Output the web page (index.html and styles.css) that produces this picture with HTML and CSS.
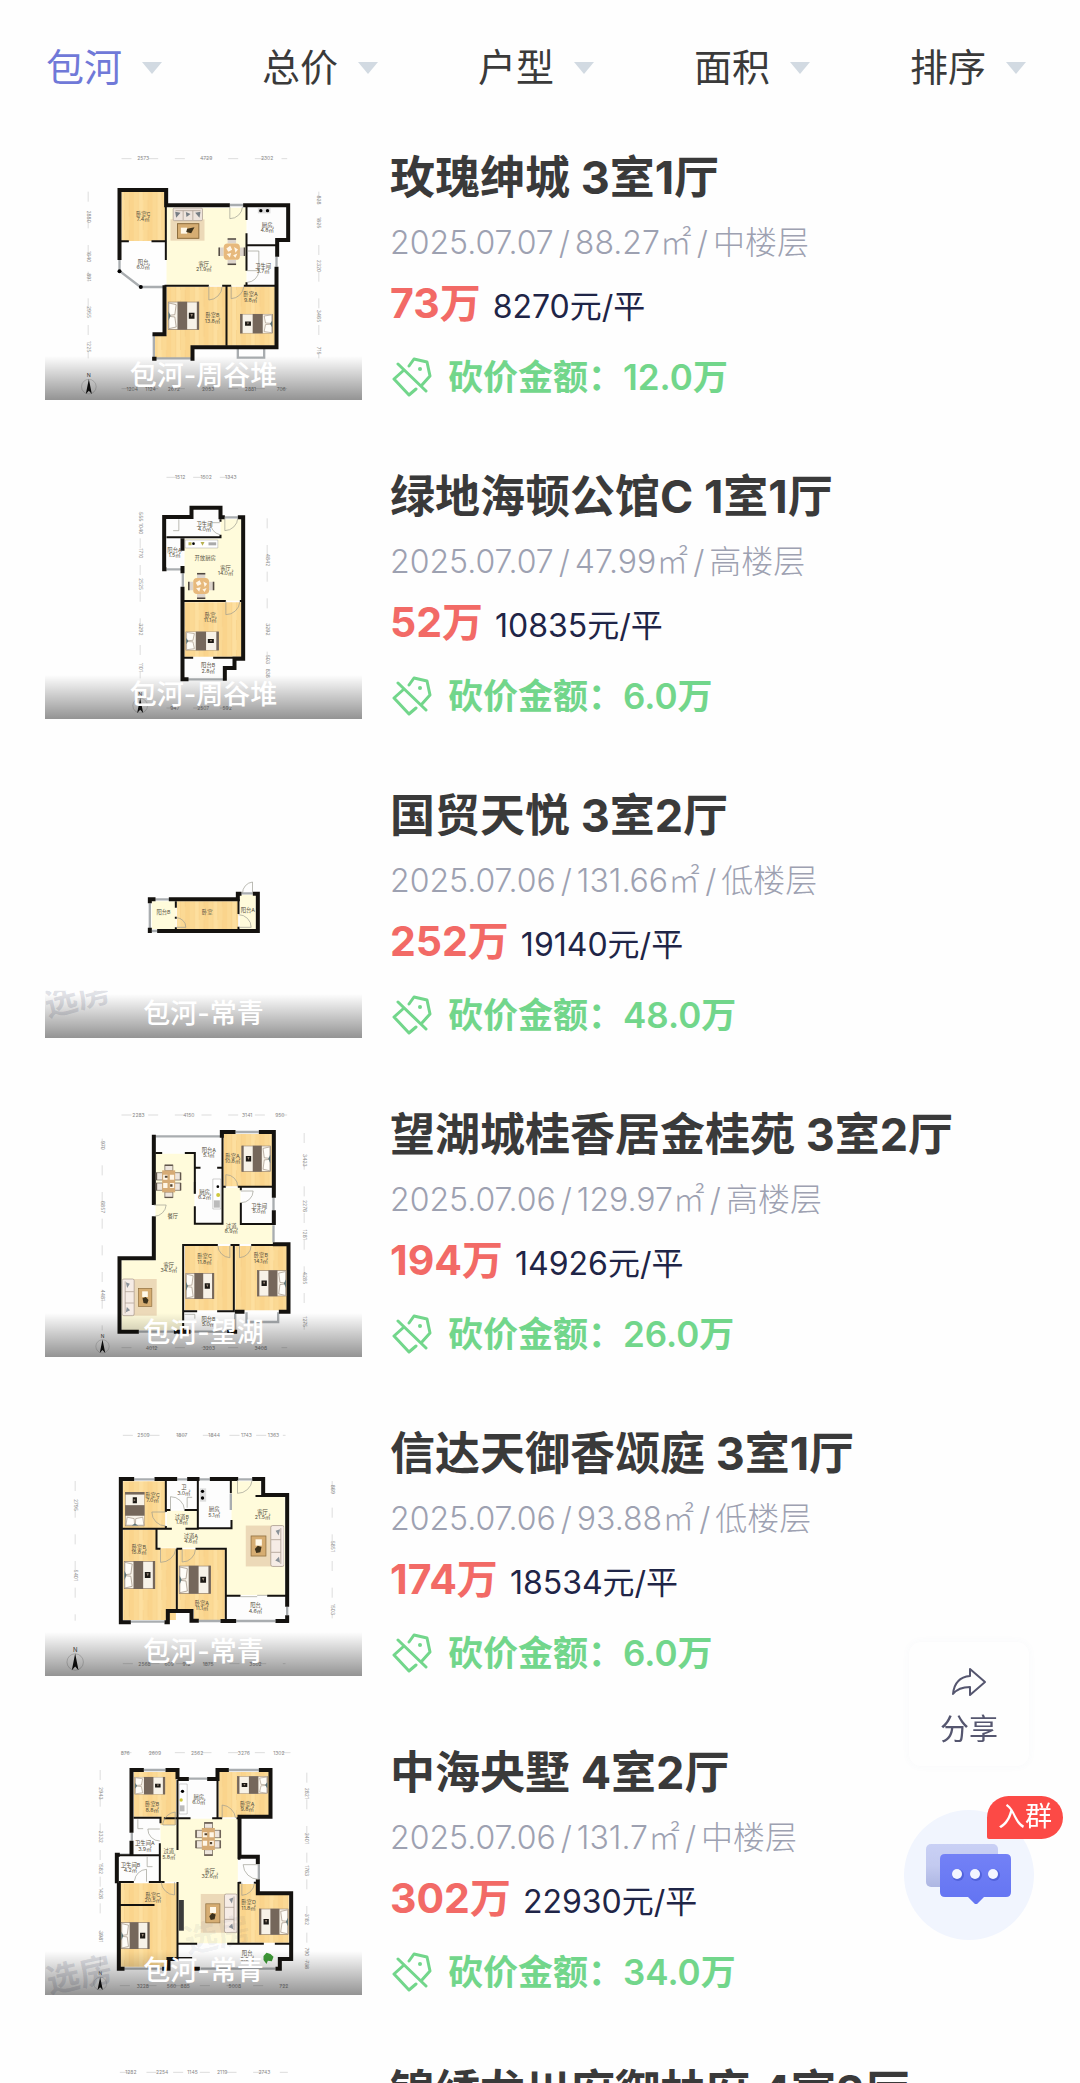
FILE: index.html
```
<!DOCTYPE html>
<html lang="zh-CN">
<head>
  <meta charset="UTF-8">
  <meta name="viewport" content="width=device-width, initial-scale=1.0">
  <title>包河二手房</title>
  <link rel="stylesheet" href="styles.css">
</head>
<body>
  <!-- shared shapes for the floor plans -->
  <svg class="defs" width="0" height="0" aria-hidden="true">
    <defs>
      <pattern id="wood" width="56" height="90" patternUnits="userSpaceOnUse">
        <rect width="56" height="90" fill="#fbd994"></rect>
        <rect x="14" width="14" height="90" fill="#fddf9f"></rect>
        <rect x="42" width="14" height="90" fill="#fad48c"></rect>
        <path d="M14 0V90M28 30V90M42 0V50" stroke="#f2c67a" stroke-width="1"></path>
      </pattern>
      <symbol id="bed" viewBox="0 0 96 86" preserveAspectRatio="none">
        <rect x="2" y="2" width="92" height="82" fill="#f7f2e8" stroke="#8a7868" stroke-width="2"></rect>
        <path d="M4 5L26 10L22 40L4 42ZM4 45L22 47L26 77L4 82Z" fill="#fffdf8" stroke="#98897a" stroke-width="2"></path>
        <path d="M3 30L9 43L3 58Z" fill="#587277"></path>
        <rect x="30" y="1" width="29" height="84" fill="#75675b"></rect>
        <rect x="88" y="1" width="7" height="84" fill="#75675b"></rect>
        <path d="M64 34H81V52H64Z" fill="#1c1915"></path>
        <path d="M69 38H76L73 47Z" fill="#9b8b7b"></path>
      </symbol>
      <symbol id="sofa" viewBox="0 0 104 110">
        <rect x="26" y="0" width="78" height="110" fill="#ecd9b8"></rect>
        <rect x="0" y="0" width="36" height="110" rx="5" fill="#f6ece6" stroke="#a39488" stroke-width="2"></rect>
        <path d="M9 7V103M9 38H35M9 72H35" stroke="#a39488" stroke-width="2"></path>
        <path d="M11 10L23 14L15 27ZM11 100L24 94L14 84Z" fill="#8b9299"></path>
        <rect x="49" y="28" width="40" height="54" fill="#d6ad72" stroke="#8d6d3e" stroke-width="2"></rect>
        <rect x="60" y="37" width="17" height="17" fill="#fff8e8"></rect>
        <path d="M61 58L71 54L79 63L75 74L64 72Z" fill="#3d321c"></path>
      </symbol>
      <symbol id="dining" viewBox="0 0 84 84">
        <path d="M29 2H55V17H29ZM29 67H55V82H29ZM2 29H17V55H2ZM67 29H82V55H67Z" fill="#ddd5cc"></path>
        <path d="M29 3H55M29 81H55M3 29V55M81 29V55" stroke="#504840" stroke-width="5"></path>
        <rect x="17" y="17" width="50" height="50" rx="12" fill="#e7b97c"></rect>
        <path d="M25 32L37 24L43 36L31 42ZM49 28L61 35L53 45ZM26 49L40 46L36 60ZM46 53L59 48L53 61Z" fill="#fff6e6"></path>
      </symbol>
      <symbol id="dining6" viewBox="0 0 78 102">
        <path d="M28 1H52V19H28ZM28 83H52V101H28ZM1 25H22V47H1ZM1 56H22V78H1ZM56 25H77V47H56ZM56 56H77V78H56Z" fill="#eee6dd" stroke="#61564b" stroke-width="2"></path>
        <path d="M28 3H52M28 99H52M3 25V47M3 56V78M75 25V47M75 56V78" stroke="#61564b" stroke-width="4"></path>
        <rect x="20" y="18" width="39" height="66" fill="#d6ab75"></rect>
        <path d="M23 31H36V46H23ZM43 31H56V46H43ZM23 56H36V71H23ZM43 56H56V71H43Z" fill="#fff6e6"></path>
        <path d="M28 34H36V40H28ZM44 60H51V67H44Z" fill="#53432f"></path>
      </symbol>
      <symbol id="north" viewBox="0 0 50 66">
        <text x="25" y="14" class="north">N</text>
        <circle cx="25" cy="42" r="22" fill="none" stroke="#8a8a8a"></circle>
        <path d="M25 19L34 64L25 54L16 64Z" fill="#111"></path>
      </symbol>
      <symbol id="tag" viewBox="0 0 40 40">
        <path d="M17 9L22 2L35 5L38 19L29 29M12 13L2 22L17 38L24 32M6 7L34 34" fill="none" stroke="#72d68b" stroke-width="3" stroke-linecap="round" stroke-linejoin="round"></path>
        <circle cx="28" cy="12" r="2" fill="#72d68b"></circle>
      </symbol>
    </defs>
  </svg>

  <div class="app">
    <nav class="filters">
      <button type="button" class="filter active">包河</button>
      <button type="button" class="filter">总价</button>
      <button type="button" class="filter">户型</button>
      <button type="button" class="filter">面积</button>
      <button type="button" class="filter">排序</button>
    </nav>

    <main class="list">
      <a class="house" href="#">
        <div class="photo">
          <svg class="plan" viewBox="15 -12 948 792">
            <path class="floor" d="M378 203H618V437H378Z"></path>
            <path fill="url(#wood)" d="M243 155H374V303H243ZM378 440H703V617H455V655H343V585H378Z"></path>
            <path class="tile" d="M622 203H740V297H706V435H622Z"></path>
            <path class="win" d="M237 360V393L300 441H372M340 583V655H455M592 620V653H671V620M708 350V380M568 195H610"></path>
            <path class="wall" d="M237 360V150H377V196H568M608 196H743V300H710V350M708 380V622H456V662M372 436V583H336M335 656H348"></path>
            <path class="inner" d="M376 155V360M235 304H265M333 304H376M372 437H505M545 437H572M610 437H705M558 437V617M618 197V240M618 280V392M618 427V437M618 316H708"></path>
            <path class="door" d="M568 200V236A38 38 0 0 0 606 200M505 438V480A42 42 0 0 0 545 440M572 438V476A40 40 0 0 0 610 440M620 392H655V333H622M655 392A36 36 0 0 1 620 427"></path>
            <circle cx="237" cy="394" r="6"></circle><circle cx="301" cy="441" r="6"></circle>
            <rect x="390" y="238" width="102" height="64" fill="#ecd9b8"></rect>
            <rect x="398" y="204" width="88" height="38" rx="4" fill="#eee4dc" stroke="#a39488" stroke-width="2"></rect>
            <path d="M428 212V240M457 212V240M405 212H480" stroke="#a39488" stroke-width="2"></path>
            <path d="M404 215L420 218L407 233ZM436 216L450 222L438 231ZM464 218L480 215L477 233Z" fill="#777e84"></path>
            <rect x="411" y="251" width="64" height="44" fill="#d6ad72" stroke="#8d6d3e" stroke-width="3"></rect>
            <path d="M421 263H440V281H421Z" fill="#fff8e8"></path><path d="M440 266L462 262L452 280L437 276Z" fill="#3d321c"></path>
            <use href="#dining" x="533" y="294" width="82" height="82"></use>
            <use href="#bed" x="381" y="484" width="96" height="86"></use>
            <use href="#bed" width="100" height="60" transform="translate(698 521) scale(-1 1)"></use>
            <path d="M652 204H690V220H652Z" fill="#dedede"></path><circle cx="661" cy="212" r="5"></circle><circle cx="681" cy="212" r="5"></circle>
            <g class="room">
              <text x="308" y="228">卧室C</text><text x="308" y="244">7.4㎡</text>
              <text x="308" y="371">阳台</text><text x="308" y="387">6.0㎡</text>
              <text x="490" y="378">客厅</text><text x="490" y="394">21.9㎡</text>
              <text x="680" y="261">厨房</text><text x="680" y="277">4.8㎡</text>
              <text x="668" y="384">卫生间</text><text x="668" y="400">3.7㎡</text>
              <text x="516" y="531">卧室B</text><text x="516" y="548">13.8㎡</text>
              <text x="630" y="468">卧室A</text><text x="630" y="485">9.8㎡</text>
            </g>
            <path class="rule" d="M243 56H740M143 155V655M835 155V655M243 746H740"></path>
            <g class="dim">
              <text x="308" y="61">2573</text><text x="497" y="61">4729</text><text x="680" y="61">2302</text>
              <text x="275" y="752">1204</text><text x="330" y="752">1124</text><text x="400" y="752">2672</text><text x="503" y="752">2053</text><text x="630" y="752">2881</text><text x="722" y="752">706</text>
              <text transform="translate(138 230) rotate(90)">2880</text><text transform="translate(138 350) rotate(90)">1640</text><text transform="translate(138 412) rotate(90)">891</text><text transform="translate(138 516) rotate(90)">2955</text><text transform="translate(138 620) rotate(90)">1225</text>
              <text transform="translate(830 180) rotate(90)">828</text><text transform="translate(830 248) rotate(90)">1825</text><text transform="translate(830 378) rotate(90)">2320</text><text transform="translate(830 528) rotate(90)">3465</text><text transform="translate(830 632) rotate(90)">715</text>
            </g>
            <use href="#north" x="120" y="698" width="50" height="66"></use>
          </svg>
          <span class="area">包河-周谷堆</span>
        </div>
        <div class="info">
          <h2>玫瑰绅城 3室1厅</h2>
          <p class="meta"><span>2025.07.07</span><i>/</i><span>88.27㎡</span><i>/</i><span>中楼层</span></p>
          <p class="price"><strong>73万</strong><span>8270元/平</span></p>
          <p class="cut"><svg><use href="#tag"></use></svg>砍价金额：12.0万</p>
        </div>
      </a>

      <a class="house" href="#">
        <div class="photo">
          <svg class="plan" viewBox="15 -15 948 792">
            <path class="floor" d="M432 236H540V178H604V422H432Z"></path>
            <path fill="url(#wood)" d="M432 427H604V590H432Z"></path>
            <path class="tile" d="M378 178H453V150H538V230H427V325H378ZM432 597H578V622H552V655H432Z"></path>
            <path class="win" d="M378 328H425M432 658H552M427 340V380M553 172H592"></path>
            <path class="wall" d="M378 328H371V171H453V143H540V172H553M592 172H608V596H582V624H553V662M444 658H426V380M426 340V318M426 272V235"></path>
            <path class="inner" d="M378 232H432M426 232H540V224M540 178V185M428 423H556M598 423H606M428 593H458M518 593H606"></path>
            <path class="door" d="M553 172V212A40 40 0 0 0 592 174M556 424V464A42 42 0 0 0 598 426M510 188H538M510 188A36 36 0 0 0 538 224M415 178V212H398"></path>
            <path d="M434 240H532V264H434Z" fill="#fff" stroke="#777"></path>
            <path d="M444 247H453V256H444ZM480 246H492L486 257Z" fill="#b6b04f"></path><circle cx="459" cy="251" r="4"></circle><path d="M504 247H527V256H504Z" fill="#aaa"></path>
            <use href="#dining" x="440" y="338" width="84" height="80"></use>
            <use href="#bed" x="434" y="514" width="102" height="58"></use>
            <g class="room">
              <text x="492" y="197">卫生间</text><text x="492" y="213">4.0㎡</text>
              <text x="402" y="276">阳台A</text><text x="402" y="292">1.5㎡</text>
              <text x="494" y="299">开放厨房</text>
              <text x="555" y="329">客厅</text><text x="555" y="345">14.0㎡</text>
              <text x="509" y="470">卧室</text><text x="509" y="486">11.1㎡</text>
              <text x="503" y="622">阳台B</text><text x="503" y="638">2.8㎡</text>
            </g>
            <path class="rule" d="M378 52H604M299 155V655M680 175V655M378 744H570"></path>
            <g class="dim">
              <text x="419" y="58">1512</text><text x="497" y="58">1502</text><text x="571" y="58">1343</text>
              <text x="403" y="750">947</text><text x="488" y="750">2507</text><text x="560" y="750">592</text>
              <text transform="translate(294 170) rotate(90)">555</text><text transform="translate(294 206) rotate(90)">1040</text><text transform="translate(294 280) rotate(90)">1710</text><text transform="translate(294 372) rotate(90)">2525</text><text transform="translate(294 508) rotate(90)">3292</text><text transform="translate(294 622) rotate(90)">1101</text>
              <text transform="translate(675 300) rotate(90)">4842</text><text transform="translate(675 508) rotate(90)">3292</text><text transform="translate(675 598) rotate(90)">503</text><text transform="translate(675 640) rotate(90)">838</text>
            </g>
            <use href="#north" x="274" y="695" width="50" height="66"></use>
          </svg>
          <span class="area">包河-周谷堆</span>
        </div>
        <div class="info">
          <h2>绿地海顿公馆C 1室1厅</h2>
          <p class="meta"><span>2025.07.07</span><i>/</i><span>47.99㎡</span><i>/</i><span>高楼层</span></p>
          <p class="price"><strong>52万</strong><span>10835元/平</span></p>
          <p class="cut"><svg><use href="#tag"></use></svg>砍价金额：6.0万</p>
        </div>
      </a>

      <a class="house" href="#">
        <div class="photo">
          <svg class="plan" viewBox="15 -258 948 792">
            <path class="floor" d="M334 124H406V207H334ZM598 104H646V207H598Z"></path>
            <path fill="url(#wood)" d="M409 124H593V207H409Z"></path>
            <path class="win" d="M344 118H386M328 130V205M334 213H352M603 100H637"></path>
            <path class="wall" d="M322 118H345M328 112V130M385 118H592V96M586 101H603M637 101H652V213H350M334 213H322M328 219V203"></path>
            <path class="inner" d="M406 124V143M406 170V176M406 202V210M594 118V162M594 200V210"></path>
            <path class="door" d="M636 66V102M606 100A34 34 0 0 1 636 66M408 173A29 29 0 0 1 436 202H408M594 164A38 38 0 0 1 632 202H596"></path>
            <g class="room">
              <text x="369" y="163">阳台B</text><text x="500" y="163">卧室</text><text x="622" y="155">阳台A</text>
            </g>
            <svg x="15" y="392" width="948" height="142">
              <text class="mark" transform="translate(6 78) rotate(-14)">选房</text>
            </svg>
          </svg>
          <span class="area">包河-常青</span>
        </div>
        <div class="info">
          <h2>国贸天悦 3室2厅</h2>
          <p class="meta"><span>2025.07.06</span><i>/</i><span>131.66㎡</span><i>/</i><span>低楼层</span></p>
          <p class="price"><strong>252万</strong><span>19140元/平</span></p>
          <p class="cut"><svg><use href="#tag"></use></svg>砍价金额：48.0万</p>
        </div>
      </a>

      <a class="house" href="#">
        <div class="photo">
          <svg class="plan" viewBox="15 -22 948 792">
            <path class="floor" d="M345 160H462V370H549V262H600V371H697V431H428V690H243V480H345Z"></path>
            <path fill="url(#wood)" d="M549 101H695V258H549ZM433 437H579V630H433ZM584 437H742V630H584Z"></path>
            <path class="tile" d="M345 108H545V368H465V157H345ZM603 262H695V369H603ZM430 637H582V690H430Z"></path>
            <path class="win" d="M345 108H540M585 95H655M699 292V330M699 375V425M618 636V665H713V636M295 694H400M450 694H560M584 640V690M463 245V280"></path>
            <path class="wall" d="M340 103V314M340 348V474H237V694H295M400 694H450M560 694H590M585 95H544V112M655 95H700V292M700 330V374M697 432H744V634H715M612 634H583"></path>
            <path class="inner" d="M345 158H365M433 158H463V202H480M530 202H546M546 95V370H463V318M463 280V245M463 202V245M546 259H556M592 259H700M601 259V270M601 307V371H700M428 694V434H532M570 434H597M632 434H700M580 434V634M428 633H470M530 633H583"></path>
            <path class="door" d="M340 314H377A37 37 0 0 1 342 348M556 259V223A36 36 0 0 1 592 259M601 272H638A36 36 0 0 1 602 307M568 436V472A38 38 0 0 1 532 436M597 436V472A37 37 0 0 0 632 436M432 642H463V655"></path>
            <path d="M517 236H541V326H517Z" fill="#fff" stroke="#777"></path><circle cx="532" cy="259" r="4"></circle><circle cx="533" cy="284" r="6" fill="#cfc83d"></circle><path d="M520 300H538V322H520Z" fill="#bbb"></path>
            <use href="#dining6" x="345" y="192" width="78" height="102"></use>
            <use href="#sofa" x="245" y="531" width="104" height="120"></use>
            <use href="#bed" x="434" y="517" width="88" height="80"></use>
            <use href="#bed" width="90" height="80" transform="translate(692 135) scale(-1 1)"></use>
            <use href="#bed" width="90" height="80" transform="translate(739 509) scale(-1 1)"></use>
            <g class="room">
              <text x="505" y="154">阳台A</text><text x="505" y="170">5.1㎡</text>
              <text x="576" y="173">卧室A</text><text x="576" y="189">10.8㎡</text>
              <text x="492" y="281">厨房</text><text x="492" y="297">6.2㎡</text>
              <text x="656" y="323">卫生间</text><text x="656" y="339">5.0㎡</text>
              <text x="397" y="354">餐厅</text>
              <text x="572" y="383">过道</text><text x="572" y="399">8.9㎡</text>
              <text x="385" y="499">客厅</text><text x="385" y="515">34.5㎡</text>
              <text x="492" y="474">卧室C</text><text x="492" y="490">11.8㎡</text>
              <text x="661" y="471">卧室B</text><text x="661" y="487">14.1㎡</text>
              <text x="504" y="661">阳台B</text><text x="504" y="677">5.0㎡</text>
            </g>
            <path class="rule" d="M243 44H740M185 115V690M791 98V690M243 742H740"></path>
            <g class="dim">
              <text x="294" y="50">2283</text><text x="445" y="50">4150</text><text x="620" y="50">3141</text><text x="718" y="50">950</text>
              <text x="333" y="748">4012</text><text x="505" y="748">3203</text><text x="661" y="748">3408</text>
              <text transform="translate(180 135) rotate(90)">970</text><text transform="translate(180 320) rotate(90)">6857</text><text transform="translate(180 585) rotate(90)">4481</text>
              <text transform="translate(786 180) rotate(90)">3423</text><text transform="translate(786 317) rotate(90)">2276</text><text transform="translate(786 403) rotate(90)">1281</text><text transform="translate(786 533) rotate(90)">4285</text><text transform="translate(786 664) rotate(90)">1275</text>
            </g>
            <use href="#north" x="161" y="700" width="50" height="60"></use>
          </svg>
          <span class="area">包河-望湖</span>
        </div>
        <div class="info">
          <h2>望湖城桂香居金桂苑 3室2厅</h2>
          <p class="meta"><span>2025.07.06</span><i>/</i><span>129.97㎡</span><i>/</i><span>高楼层</span></p>
          <p class="price"><strong>194万</strong><span>14926元/平</span></p>
          <p class="cut"><svg><use href="#tag"></use></svg>砍价金额：26.0万</p>
        </div>
      </a>

      <a class="house" href="#">
        <div class="photo">
          <svg class="plan" viewBox="15 -24 948 792">
            <path class="floor" d="M379 272H470V326H573V184H660V231H733V525H557V383H350V328H379Z"></path>
            <path fill="url(#wood)" d="M247 184H374V324H247ZM247 330H347V385H406V600H247ZM412 388H553V600H460V568H412Z"></path>
            <path class="tile" d="M380 184H468V268H380ZM476 184H571V322H476ZM560 532H733V598H560Z"></path>
            <path class="win" d="M281 178H342M410 178H440M476 178H508M271 605H372M475 603H540M587 603H705M740 560V586M571 222V270M593 178H635"></path>
            <path class="wall" d="M281 177H241V607H271M372 607H382V573H453V602H475M342 177H410M440 177H477M508 177H593M635 177H668V225H740V560M745 603H705M740 586V608M587 603H540"></path>
            <path class="inner" d="M376 183V276M376 318V325M376 270H390M432 270H472M472 183V325H573V300M571 183V220M241 326H394M435 326H475M348 326V386H360M408 386H425M465 386H556V602M409 386V573M556 527H600M680 527H740M645 228H665"></path>
            <path class="door" d="M591 180V220A44 44 0 0 0 635 180M376 276H334A42 42 0 0 0 376 318M390 270V230A42 42 0 0 1 432 270M360 387V427A46 46 0 0 0 406 387M425 387V426A40 40 0 0 0 465 387M440 263V232H455M600 530H650M650 526H680"></path>
            <path d="M478 205H497V245H478Z" fill="#dedede"></path><circle cx="486" cy="214" r="5"></circle><circle cx="486" cy="234" r="5"></circle>
            <use href="#sofa" width="116" height="132" transform="translate(731 312) scale(-1 1)"></use>
            <use href="#bed" width="105" height="60" transform="translate(253 320) rotate(-90)"></use>
            <use href="#bed" x="249" y="422" width="96" height="86"></use>
            <use href="#bed" x="414" y="436" width="98" height="86"></use>
            <g class="room">
              <text x="336" y="231">卧室C</text><text x="336" y="247">7.0㎡</text>
              <text x="430" y="208">卫</text><text x="430" y="224">3.0㎡</text>
              <text x="521" y="274">厨房</text><text x="521" y="290">5.1㎡</text>
              <text x="424" y="297">过道B</text><text x="424" y="313">1.8㎡</text>
              <text x="451" y="353">过道A</text><text x="451" y="369">4.6㎡</text>
              <text x="666" y="281">客厅</text><text x="666" y="297">21.5㎡</text>
              <text x="295" y="387">卧室B</text><text x="295" y="403">15.8㎡</text>
              <text x="484" y="555">卧室A</text><text x="484" y="571">11.1㎡</text>
              <text x="645" y="562">阳台</text><text x="645" y="578">4.6㎡</text>
            </g>
            <path class="rule" d="M247 46H735M104 183V602M875 183V595M247 731H735"></path>
            <g class="dim">
              <text x="309" y="52">2509</text><text x="424" y="52">1807</text><text x="521" y="52">1844</text><text x="618" y="52">1743</text><text x="699" y="52">1363</text>
              <text x="312" y="737">2568</text><text x="386" y="737">609</text><text x="438" y="737">912</text><text x="503" y="737">1875</text><text x="645" y="737">3502</text>
              <text transform="translate(99 255) rotate(90)">2795</text><text transform="translate(99 466) rotate(90)">5401</text>
              <text transform="translate(870 208) rotate(90)">869</text><text transform="translate(870 379) rotate(90)">5851</text><text transform="translate(870 568) rotate(90)">1503</text>
            </g>
            <use href="#north" x="76" y="678" width="56" height="76"></use>
          </svg>
          <span class="area">包河-常青</span>
        </div>
        <div class="info">
          <h2>信达天御香颂庭 3室1厅</h2>
          <p class="meta"><span>2025.07.06</span><i>/</i><span>93.88㎡</span><i>/</i><span>低楼层</span></p>
          <p class="price"><strong>174万</strong><span>18534元/平</span></p>
          <p class="cut"><svg><use href="#tag"></use></svg>砍价金额：6.0万</p>
        </div>
      </a>

      <a class="house" href="#">
        <div class="photo">
          <svg class="plan" viewBox="15 -27 948 792">
            <path class="floor" d="M413 236H592V610H413V425H360V256H413Z"></path>
            <path fill="url(#wood)" d="M280 96H407V255H360V230H280ZM534 96H686V232H534ZM238 430H411V652H380V680H238ZM596 432H650V465H745V608H596Z"></path>
            <path class="tile" d="M416 122H528V232H416ZM280 236H356V342H280ZM238 350H356V422H238ZM416 614H745V650H715V684H416ZM598 356H652V425H598Z"></path>
            <path class="win" d="M310 90H375M445 116H500M565 90H655M274 278V302M238 344H270M250 686H365M480 686H705M655 372V418"></path>
            <path class="wall" d="M310 90H273V278M273 302V346M238 344H229V430M235 428V686H252M375 90H411V118M365 686H384V657H412M411 117H445M500 117H531V90H565M655 90H690V230H597V350H652V372M652 418V460H752V657H718V692M705 686H718M411 657H455M455 686H478"></path>
            <path class="inner" d="M411 120V330M408 235H370M279 233H360V250M358 310V426H325M411 235H450M515 235H545M588 235H600M531 120V235M235 346H358M235 426H280M238 495H342M411 426V655M592 356H600M594 426V610M594 428H602M640 428H655M358 426H372M411 611H470M560 611H670M703 611H750"></path>
            <path class="door" d="M367 255V250A42 42 0 0 1 404 216V255H367M545 234V195A44 44 0 0 1 585 234M358 267H322A36 36 0 0 0 358 303M282 422A38 38 0 0 1 318 388V425M362 427A42 42 0 0 0 402 465V427M608 374H654M608 374A46 46 0 0 0 654 418M604 428V466A40 40 0 0 0 642 430M292 238V266H308M320 350V380H336"></path>
            <path d="M416 132H440V222H416Z" fill="#fff" stroke="#777"></path><circle cx="426" cy="154" r="5"></circle><circle cx="422" cy="180" r="5" fill="#cfc83d"></circle><path d="M418 196H432V214H418Z" fill="#bbb"></path>
            <rect x="415" y="480" width="15" height="92" fill="#3b3b3b"></rect>
            <use href="#dining6" x="464" y="246" width="78" height="102"></use>
            <use href="#sofa" width="110" height="120" transform="translate(590 460) scale(-1 1)"></use>
            <use href="#bed" x="281" y="110" width="94" height="54"></use>
            <use href="#bed" width="94" height="54" transform="translate(683 108) scale(-1 1)"></use>
            <use href="#bed" x="240" y="546" width="88" height="82"></use>
            <use href="#bed" width="90" height="80" transform="translate(745 505) scale(-1 1)"></use>
            <path d="M669 648L678 638L690 642L699 650L694 664L682 662L678 672L669 660Z" fill="#3f9b38"></path>
            <g class="room">
              <text x="335" y="199">卧室B</text><text x="335" y="215">8.8㎡</text>
              <text x="475" y="176">厨房</text><text x="475" y="192">6.0㎡</text>
              <text x="620" y="198">卧室A</text><text x="620" y="214">9.8㎡</text>
              <text x="313" y="316">卫生间A</text><text x="313" y="332">3.9㎡</text>
              <text x="270" y="380">卫生间B</text><text x="270" y="396">4.2㎡</text>
              <text x="385" y="340">过道</text><text x="385" y="356">5.8㎡</text>
              <text x="508" y="398">客厅</text><text x="508" y="414">32.6㎡</text>
              <text x="337" y="470">卧室C</text><text x="337" y="486">20.5㎡</text>
              <text x="624" y="493">卧室D</text><text x="624" y="509">11.8㎡</text>
              <text x="620" y="646">阳台</text><text x="620" y="662">8.6㎡</text>
            </g>
            <path class="rule" d="M243 38H750M179 90V685M799 98V685M238 737H740"></path>
            <g class="dim">
              <text x="254" y="44">876</text><text x="343" y="44">2609</text><text x="470" y="44">2562</text><text x="610" y="44">3276</text><text x="715" y="44">1302</text>
              <text x="307" y="743">3228</text><text x="393" y="743">560</text><text x="434" y="743">885</text><text x="583" y="743">5008</text><text x="730" y="743">722</text>
              <text transform="translate(174 160) rotate(90)">2943</text><text transform="translate(174 290) rotate(90)">2332</text><text transform="translate(174 385) rotate(90)">1582</text><text transform="translate(174 460) rotate(90)">1426</text><text transform="translate(174 590) rotate(90)">3981</text>
              <text transform="translate(794 160) rotate(90)">2821</text><text transform="translate(794 295) rotate(90)">2401</text><text transform="translate(794 392) rotate(90)">1763</text><text transform="translate(794 538) rotate(90)">3182</text><text transform="translate(794 636) rotate(90)">790</text><text transform="translate(794 674) rotate(90)">738</text>
            </g>
            <use href="#north" x="156" y="694" width="46" height="58"></use>
            <text class="mark" transform="translate(26 760) rotate(-12)">选房</text>
            <text class="mark faint" transform="translate(440 640) rotate(-12)">选房</text>
          </svg>
          <span class="area">包河-常青</span>
        </div>
        <div class="info">
          <h2>中海央墅 4室2厅</h2>
          <p class="meta"><span>2025.07.06</span><i>/</i><span>131.7㎡</span><i>/</i><span>中楼层</span></p>
          <p class="price"><strong>302万</strong><span>22930元/平</span></p>
          <p class="cut"><svg><use href="#tag"></use></svg>砍价金额：34.0万</p>
        </div>
      </a>

      <a class="house" href="#">
        <div class="photo">
          <svg class="plan" viewBox="15 930 948 792">
            <path class="rule" d="M238 997H742"></path>
            <g class="dim">
              <text x="271" y="1003">1282</text><text x="365" y="1003">2254</text><text x="456" y="1003">1145</text><text x="545" y="1003">2119</text><text x="672" y="1003">2743</text>
            </g>
          </svg>
        </div>
        <div class="info">
          <h2>锦绣龙川府御林府 4室2厅</h2>
        </div>
      </a>
    </main>
  </div>

  <aside class="float">
    <button type="button" class="share">
      <svg width="36" height="30" viewBox="0 0 36 30">
        <path d="M19 2L34 15L19 28V20C11 20 6 22 2 27C3 17 8 10 19 9Z" fill="none" stroke="#55566f" stroke-width="2" stroke-linejoin="round"></path>
      </svg>
      分享
    </button>
    <button type="button" class="group" aria-label="入群">
      <svg width="88" height="64" viewBox="0 0 88 64">
        <defs>
          <linearGradient id="back" x1="0" y1="0" x2="0" y2="1">
            <stop offset="0" stop-color="#c9d0f5"></stop>
            <stop offset="0.5" stop-color="#c3caf0"></stop>
            <stop offset="1" stop-color="#adb6e2"></stop>
          </linearGradient>
          <linearGradient id="front" x1="0" y1="0" x2="0" y2="1">
            <stop offset="0" stop-color="#7381f6"></stop>
            <stop offset="1" stop-color="#6374f2"></stop>
          </linearGradient>
        </defs>
        <rect x="1" y="1" width="72" height="43" rx="5" fill="url(#back)"></rect>
        <path d="M20 11H81Q86 11 86 16V49Q86 54 81 54H59L52 61H50L43 54H20Q15 54 15 49V16Q15 11 20 11Z" fill="url(#front)"></path>
        <circle cx="33" cy="32" r="6" fill="#5263dc"></circle><circle cx="51" cy="32" r="6" fill="#5263dc"></circle><circle cx="69" cy="32" r="6" fill="#5263dc"></circle>
        <circle cx="32" cy="31" r="5" fill="#f3f5ff"></circle><circle cx="50" cy="31" r="5" fill="#f3f5ff"></circle><circle cx="68" cy="31" r="5" fill="#f3f5ff"></circle>
      </svg>
      <span class="badge">入群</span>
    </button>
  </aside>
</body>
</html>
```
FILE: styles.css
```
* {
    box-sizing: border-box;
}
body {
    margin: 0;
    background-color: #fefefe;
    color: #3a3a3a;
    font-family: Inter, "Noto Sans CJK SC", sans-serif;
}
button {
    border: none;
    background: none;
    padding: 0;
    font-family: inherit;
    cursor: pointer;
}
.defs {
    position: absolute;
}
.app {
    display: flex;
    flex-direction: column;
    height: 100vh;
}

/* filter bar */
.filters {
    display: grid;
    grid-template-columns: repeat(5, 1fr);
    flex: none;
    padding-bottom: 8px;
}
.filter {
    display: flex;
    align-items: center;
    gap: 20px;
    height: 128px;
    padding-left: 46px;
    color: #3a3a3a;
    font-size: 38px;
}
.filter::after {
    content: "";
    margin-top: 8px;
    border: 10px solid transparent;
    border-top: 12px solid #d2dae2;
    border-bottom: none;
}
.filter.active {
    color: #7079d8;
}

/* house list */
.list {
    flex: 1;
    min-height: 0;
    padding: 0 45px;
    overflow-y: auto;
    scrollbar-width: none;
}
.house {
    display: flex;
    gap: 28px;
    margin-bottom: 55px;
    color: inherit;
    text-decoration: none;
}
.photo {
    position: relative;
    flex: none;
    width: 317px;
    height: 264px;
}
.plan {
    display: block;
    width: 100%;
    height: 100%;
}
.area {
    position: absolute;
    left: 0;
    right: 0;
    bottom: 0;
    height: 44px;
    line-height: 40px;
    background: linear-gradient(rgba(0, 0, 0, 0), rgba(0, 0, 0, 0.42));
    color: #fff;
    font-size: 27px;
    font-weight: 500;
    text-align: center;
}
.info {
    flex: 1;
    min-width: 0;
}
.info h2,
.info p {
    margin: 0;
    white-space: nowrap;
}
.info h2 {
    padding-top: 10px;
    font-size: 45px;
    font-weight: 700;
    line-height: 64px;
}
.meta {
    display: flex;
    gap: 5px;
    padding-top: 9px;
    color: #9da1b1;
    font-size: 32px;
    font-weight: 300;
    line-height: 48px;
}
.meta i {
    font-style: normal;
}
.price {
    display: flex;
    align-items: baseline;
    gap: 12px;
    line-height: 64px;
    padding-top: 4px;
}
.price strong {
    color: #f26a66;
    font-size: 41px;
    font-weight: 700;
}
.price span {
    color: #1f2547;
    font-size: 32px;
}
.cut {
    display: flex;
    align-items: center;
    gap: 16px;
    padding: 16px 0 0 2px;
    color: #72d68b;
    font-size: 35px;
    font-weight: 600;
    line-height: 44px;
}
.cut svg {
    width: 40px;
    height: 40px;
}

/* floor plans */
.floor {
    fill: #fffbdb;
}
.tile {
    fill: #fdfdfd;
}
.wall {
    fill: none;
    stroke: #14120f;
    stroke-width: 12px;
}
.inner {
    fill: none;
    stroke: #14120f;
    stroke-width: 6px;
}
.win {
    fill: none;
    stroke: #a9adb0;
    stroke-width: 7px;
}
.door {
    fill: none;
    stroke: #9a9a90;
    stroke-width: 2px;
}
.room {
    fill: #55503f;
    font-size: 16px;
    text-anchor: middle;
}
.rule {
    fill: none;
    stroke: #999;
    stroke-width: 1px;
    stroke-dasharray: 30 50;
}
.dim {
    fill: #888;
    font-size: 15px;
    text-anchor: middle;
}
.north {
    fill: #444;
    font-size: 16px;
    text-anchor: middle;
}
.mark {
    fill: rgba(70, 80, 110, 0.16);
    font-size: 100px;
    font-weight: 700;
}
.mark.faint {
    fill: rgba(70, 80, 110, 0.08);
}

/* floating actions */
.float {
    position: fixed;
    right: 46px;
    bottom: 143px;
    display: flex;
    flex-direction: column;
    align-items: center;
    gap: 44px;
}
.share {
    display: flex;
    flex-direction: column;
    align-items: center;
    justify-content: center;
    gap: 9px;
    width: 120px;
    height: 124px;
    padding-top: 6px;
    border-radius: 12px;
    background-color: #fefefe;
    box-shadow: 0 0 8px rgba(80, 90, 160, 0.04);
    color: #55566f;
    font-size: 29px;
}
.group {
    position: relative;
    display: flex;
    align-items: center;
    justify-content: center;
    width: 130px;
    height: 130px;
    border-radius: 50%;
    background-color: #f1f5fe;
}
.badge {
    position: absolute;
    top: -14px;
    right: -29px;
    width: 76px;
    height: 43px;
    line-height: 42px;
    border-radius: 22px 22px 22px 2px;
    background-color: #fc4a46;
    color: #fff;
    font-size: 27px;
}
```
